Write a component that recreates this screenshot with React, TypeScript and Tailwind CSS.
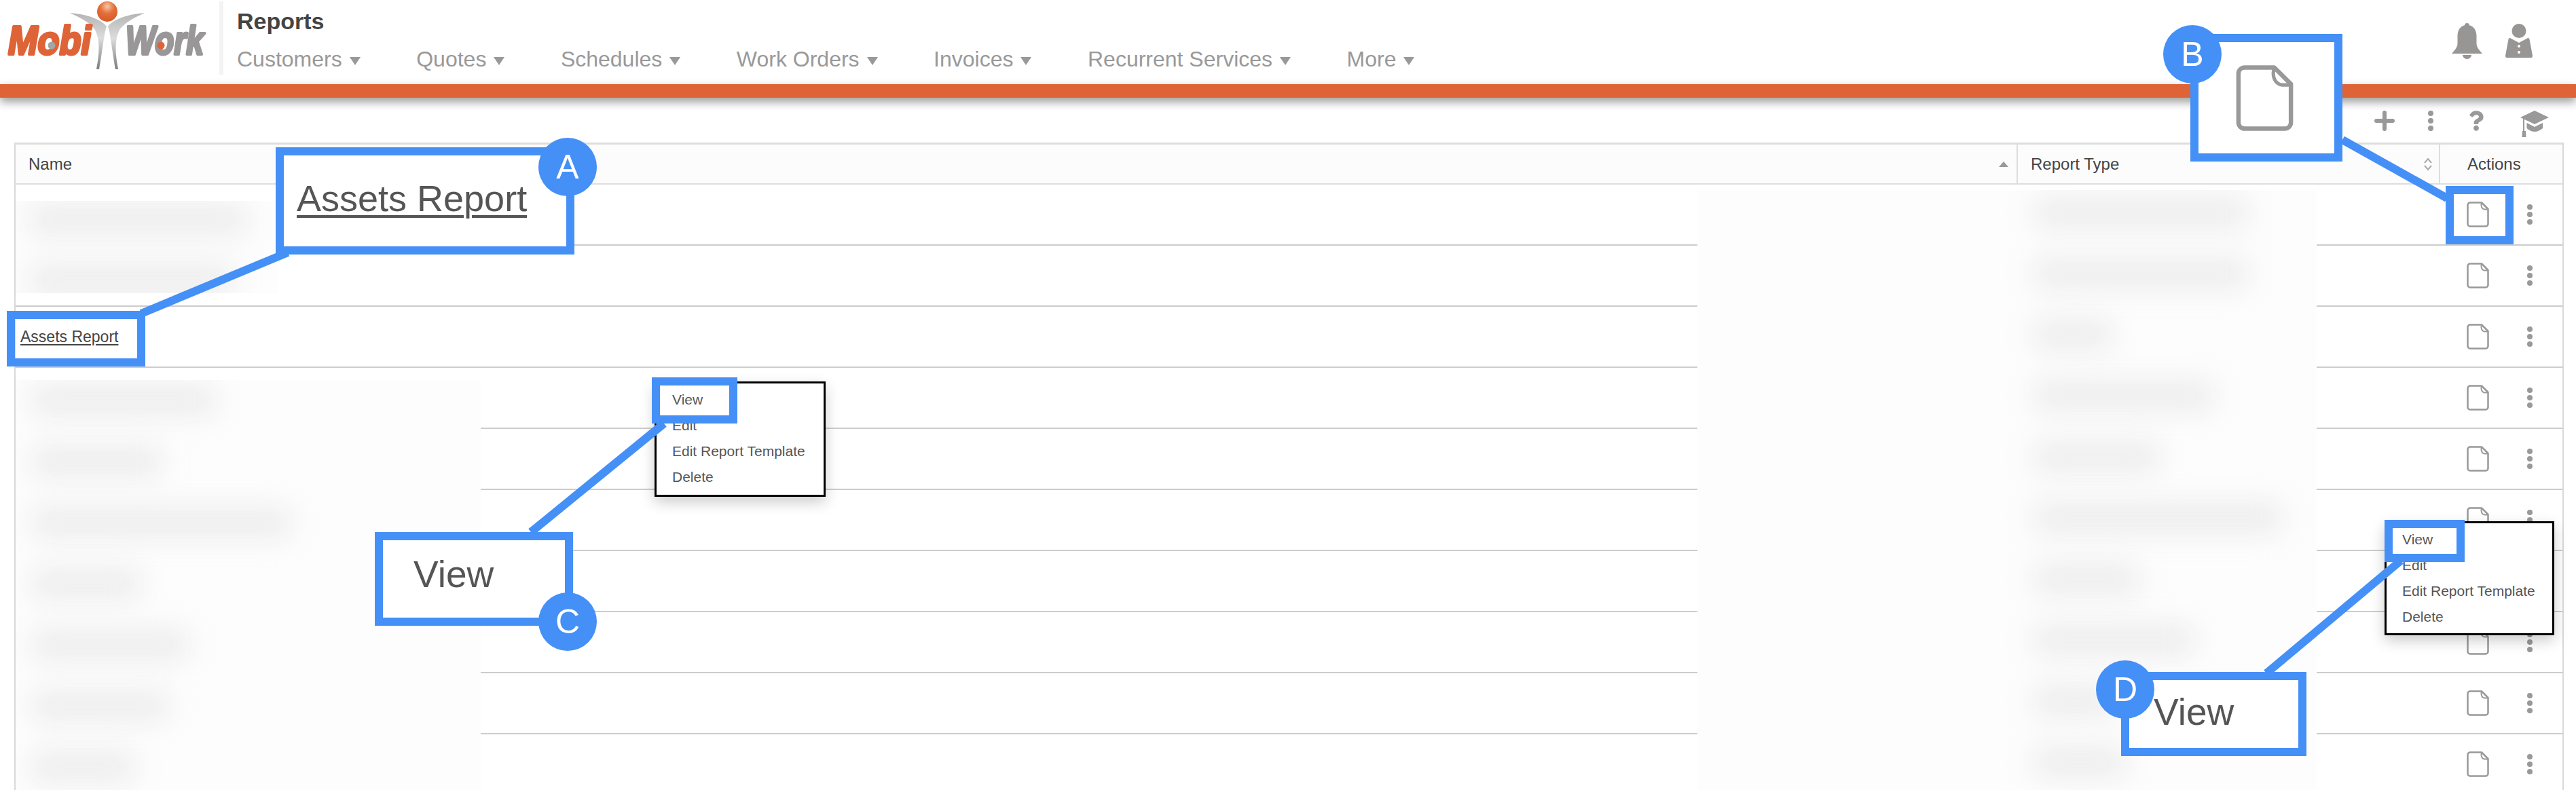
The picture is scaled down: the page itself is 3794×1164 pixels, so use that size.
import React from "react";
import { FaQuestion } from "react-icons/fa";

const navItems = ["Customers", "Quotes", "Schedules", "Work Orders", "Invoices", "Recurrent Services", "More"];
const rowCols = "grid grid-cols-[2949px_622px_1fr]";

const Logo = () => (
  <svg width="323" height="124" viewBox="0 0 323 124" className="shrink-0 overflow-visible">
    <defs>
      <linearGradient id="arm" x1="0" y1="0" x2="0" y2="1">
        <stop offset="0" stopColor="#b4b4b4" />
        <stop offset="0.45" stopColor="#dcdcdc" />
        <stop offset="1" stopColor="#7d7d7d" />
      </linearGradient>
      <radialGradient id="ball" cx="0.5" cy="0.25" r="0.7">
        <stop offset="0" stopColor="#f5c7a8" />
        <stop offset="0.5" stopColor="#e46f3a" />
        <stop offset="1" stopColor="#d95c28" />
      </radialGradient>
    </defs>
    <path d="M103 19C125 21 148 27 157 39C153 50 151 75 146 102L142 102C146 80 148 60 140 44C132 33 118 26 103 19Z" fill="url(#arm)" />
    <path d="M213 19C191 21 168 27 159 39C163 50 165 75 170 102L174 102C170 80 168 60 176 44C184 33 198 26 213 19Z" fill="url(#arm)" />
    <circle cx="158" cy="17" r="15" fill="url(#ball)" />
    <text x="12" y="80" fontSize="60" fontWeight="700" fontStyle="italic" fill="#de6437" stroke="#de6437" strokeWidth="4" strokeLinejoin="round" textLength="122" lengthAdjust="spacingAndGlyphs" fontFamily="Liberation Sans, sans-serif">Mobi</text>
    <text x="185" y="80" fontSize="60" fontWeight="700" fontStyle="italic" fill="#999797" stroke="#999797" strokeWidth="4" strokeLinejoin="round" textLength="115" lengthAdjust="spacingAndGlyphs" fontFamily="Liberation Sans, sans-serif">Work</text>
    <circle cx="76" cy="67" r="5.5" fill="#a5a5a5" />
    <circle cx="237" cy="67" r="5.5" fill="#de6437" />
  </svg>
);

const Bell = () => (
  <svg width="45" height="53" viewBox="0 0 45 53" fill="#989595">
    <path d="M22.5 0a3.5 3.5 0 0 1 3.4 3.2C33 5 36.5 11 36.5 19V30C36.5 36 41 40 45 45H0C4 40 8.5 36 8.5 30V19C8.5 11 12 5 19 3.2A3.5 3.5 0 0 1 22.5 0Z" />
    <path d="M16 47h13a6.5 6 0 0 1-13 0z" />
  </svg>
);

const Person = () => (
  <svg width="40" height="50" viewBox="0 0 40 50" fill="#989595" className="mt-px">
    <circle cx="20" cy="10.5" r="10.5" />
    <path d="M7 21L20 28L33 21Q35 20.5 35.5 23L40 47Q40 50 38 50H2Q0 50 0 47L4.5 23Q5 20.5 7 21Z" />
    <circle cx="20" cy="33" r="2" fill="#fff" />
    <circle cx="20" cy="42" r="2" fill="#fff" />
  </svg>
);

const Plus = () => (
  <svg width="30" height="30" viewBox="0 0 30 30" fill="none" stroke="#999" strokeWidth="6" strokeLinecap="round">
    <path d="M15 3v24M3 15h24" />
  </svg>
);

const Dots = () => (
  <svg width="8" height="30" viewBox="0 0 8 30" fill="#999">
    <circle cx="4" cy="4" r="4" />
    <circle cx="4" cy="15" r="4" />
    <circle cx="4" cy="26" r="4" />
  </svg>
);

const Cap = () => (
  <svg width="42" height="39" viewBox="0 0 42 39" fill="#999">
    <path d="M21 0L42 10L21 20L0 10Z" />
    <path d="M9.5 18L21 24L33 18V26Q21 36 9.5 26Z" />
    <path d="M4 12h2v18h-2z" />
    <path d="M3 30h5l.5 9h-6z" />
  </svg>
);

// page icon in the actions column, the big one in callout B is the same drawing
const Doc = ({ className }: { className: string }) => (
  <svg viewBox="0 0 33 38" fill="none" stroke="#999" strokeWidth="2.5" strokeLinejoin="round" className={className}>
    <path d="M5 1.5H22L31.5 11V33A3.5 3.5 0 0 1 28 36.5H5A3.5 3.5 0 0 1 1.5 33V5A3.5 3.5 0 0 1 5 1.5Z" />
    <path d="M22 1.5C20.5 6 22 11 26.5 11.5H31.5" strokeWidth="2" />
  </svg>
);

const SortBoth = () => (
  <svg width="14" height="20" viewBox="0 0 14 20" fill="none" stroke="#aaa" strokeWidth="2">
    <path d="M2 8L7 2L12 8M2 12L7 18L12 12" />
  </svg>
);

const Menu = ({ className }: { className: string }) => (
  <div className={`absolute flex flex-col gap-[14px] bg-white border-[3px] border-black pl-[23px] pt-[12px] text-[21px] leading-[24px] text-[#555] shadow-[0_8px_20px_rgba(0,0,0,0.2)] ${className}`}>
    <span>View</span>
    <span>Edit</span>
    <span>Edit Report Template</span>
    <span>Delete</span>
  </div>
);

const Blur = ({ className, bars, start }: { className: string; bars: number[]; start: number }) => (
  <div className={`absolute bg-[#fdfdfd] overflow-hidden flex flex-col gap-[46px] ${className}`}>
    {bars.map((w, i) => (
      <div key={i} className="h-[44px] shrink-0 bg-[#ececec] blur-[20px]" style={{ width: w, marginLeft: start }} />
    ))}
  </div>
);

const Badge = ({ letter, className }: { letter: string; className: string }) => (
  <div className={`absolute w-[86px] h-[86px] rounded-full bg-[#4590f7] text-white text-[50px] leading-none flex items-center justify-center ${className}`}>
    {letter}
  </div>
);

export default function App() {
  return (
    <div className="relative w-[3794px] h-[1164px] overflow-hidden bg-white font-['Liberation_Sans',Arial,sans-serif]">
      <header className="flex h-[124px]">
        <Logo />
        <div className="w-[6px] h-[108px] mt-[2px] bg-[#f3f3f3]" />
        <div className="flex flex-col pl-[20px] pt-[11px]">
          <div className="text-[34px] leading-[40px] font-bold text-[#444]">Reports</div>
          <nav className="flex gap-[82.5px] mt-[16px] text-[32px] leading-[40px] text-[#999]">
            {navItems.map((n) => (
              <span key={n} className="flex items-center gap-[11px]">
                {n}
                <span className="w-0 h-0 mt-[6px] border-x-[8.5px] border-x-transparent border-t-[12px] border-t-[#999]" />
              </span>
            ))}
          </nav>
        </div>
        <div className="ml-auto flex gap-[34px] pt-[34px] pr-[64px]">
          <Bell />
          <Person />
        </div>
      </header>
      <div className="relative h-[20px] bg-[#de6437] shadow-[0_6px_14px_rgba(0,0,0,0.4)]" />

      <div className="h-[66px] flex justify-end items-start pt-[19px] pr-[40px]">
        <Plus />
        <div className="ml-[49px]"><Dots /></div>
        <FaQuestion className="ml-[52px] w-[22px] h-[30px] text-[#999]" />
        <div className="ml-[54px]"><Cap /></div>
      </div>

      <div className="ml-[21px] w-[3755px] border-x-2 border-t-[3px] border-x-[#d9d9d9] border-t-[#ddd]">
        <div className={`${rowCols} h-[59px] bg-[#fcfcfc] border-b-2 border-[#ddd] text-[24px] text-[#444]`}>
          <div className="flex items-center justify-between pl-[19px] pr-[12px] border-r-2 border-[#ddd]">
            <span>Name</span>
            <span className="w-0 h-0 border-x-[7px] border-x-transparent border-b-[8px] border-b-[#999]" />
          </div>
          <div className="flex items-center justify-between pl-[19px] pr-[9px] border-r-2 border-[#ddd]">
            <span>Report Type</span>
            <SortBoth />
          </div>
          <div className="flex items-center pl-[40px]">Actions</div>
        </div>
        {Array.from({ length: 11 }).map((_, i) => (
          <div key={i} className={`${rowCols} h-[90px] shrink-0 border-b-2 border-[#ccc]`}>
            <div className="flex items-center pl-[7px] text-[23px] text-[#444]">
              {i === 2 && <span className="underline underline-offset-[3px]">Assets Report</span>}
            </div>
            <div />
            <div className="flex items-center gap-[56px] pl-[39px]">
              <Doc className="w-[33px] h-[38px]" />
              <Dots />
            </div>
          </div>
        ))}
      </div>

      {/* blurred out names and report types */}
      <Blur className="left-[23px] top-[296px] w-[387px] h-[136px] pt-[5px]" start={20} bars={[320, 300]} />
      <Blur className="left-[23px] top-[560px] w-[685px] h-[604px] pt-[8px]" start={24} bars={[270, 190, 380, 160, 230, 200, 150]} />
      <Blur className="left-[2500px] top-[280px] w-[912px] h-[884px] pt-[11px]" start={496} bars={[314, 314, 114, 264, 184, 364, 154, 234, 120, 134]} />

      <Menu className="left-[964px] top-[562px] w-[252px] h-[170px]" />
      <Menu className="left-[3512px] top-[768px] w-[250px] h-[168px]" />

      {/* callouts */}
      <svg className="absolute left-0 top-0 w-[3794px] h-[1164px] pointer-events-none" viewBox="0 0 3794 1164" fill="none" stroke="#4590f7" strokeWidth="12">
        <path d="M424 372L208 462" />
        <path d="M3450 206L3604 292" />
        <path d="M978 624L782 784" />
        <path d="M3536 826L3338 992" />
      </svg>

      <div className="absolute left-[10px] top-[458px] w-[204px] h-[82px] border-[12px] border-[#4590f7]" />
      <div className="absolute left-[406px] top-[217px] w-[440px] h-[158px] bg-white border-[12px] border-[#4590f7] pl-[19px] pt-[32px] text-[54px] leading-[62px] text-[#555]">
        <span className="underline decoration-[4px] underline-offset-[6px]">Assets Report</span>
      </div>
      <Badge letter="A" className="left-[793px] top-[203px]" />

      <div className="absolute left-[3602px] top-[274px] w-[100px] h-[86px] border-[12px] border-[#4590f7]" />
      <div className="absolute left-[3226px] top-[50px] w-[224px] h-[188px] bg-white border-[12px] border-[#4590f7] flex items-center justify-center">
        <Doc className="w-[85px] h-[101px] ml-[-5px]" />
      </div>
      <Badge letter="B" className="left-[3186px] top-[37px]" />

      <div className="absolute left-[960px] top-[556px] w-[126px] h-[68px] border-[12px] border-[#4590f7]" />
      <div className="absolute left-[552px] top-[784px] w-[292px] h-[138px] bg-white border-[12px] border-[#4590f7] pl-[45px] pt-[18px] text-[55px] leading-[64px] text-[#555]">View</div>
      <Badge letter="C" className="left-[793px] top-[873px]" />

      <div className="absolute left-[3512px] top-[766px] w-[118px] h-[62px] border-[12px] border-[#4590f7]" />
      <div className="absolute left-[3124px] top-[990px] w-[273px] h-[124px] bg-white border-[12px] border-[#4590f7] pl-[36px] pt-[15px] text-[55px] leading-[64px] text-[#555]">View</div>
      <Badge letter="D" className="left-[3087px] top-[973px]" />
    </div>
  );
}
